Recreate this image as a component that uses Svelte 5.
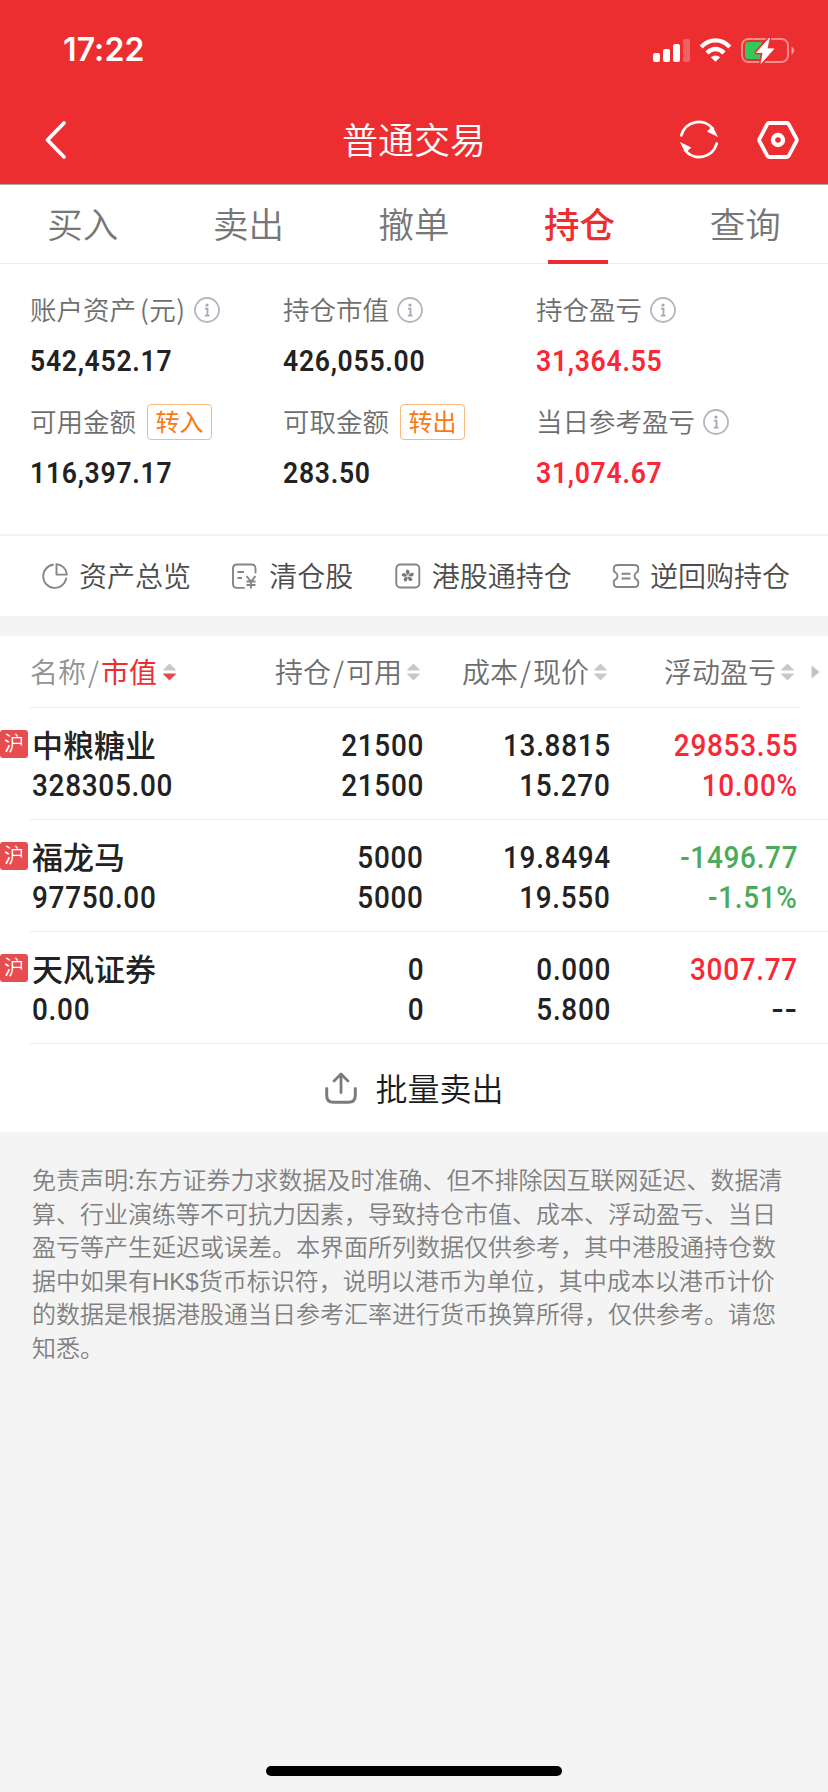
<script>
  const tabs = ['买入', '卖出', '撤单', '持仓', '查询'];
  const active = '持仓';

  const summary = [
    { label: '账户资产', unit: '(元)', value: '542,452.17', info: true },
    { label: '持仓市值', value: '426,055.00', info: true },
    { label: '持仓盈亏', value: '31,364.55', info: true, up: true },
    { label: '可用金额', value: '116,397.17', action: '转入' },
    { label: '可取金额', value: '283.50', action: '转出' },
    { label: '当日参考盈亏', value: '31,074.67', info: true, up: true }
  ];

  const links = [
    { icon: 'pie', text: '资产总览' },
    { icon: 'bill', text: '清仓股' },
    { icon: 'flower', text: '港股通持仓' },
    { icon: 'ticket', text: '逆回购持仓' }
  ];

  const rows = [
    { market: '沪', name: '中粮糖业', value: '328305.00', hold: '21500', usable: '21500', cost: '13.8815', price: '15.270', profit: '29853.55', rate: '10.00%', tone: 'up', rateTone: 'up' },
    { market: '沪', name: '福龙马', value: '97750.00', hold: '5000', usable: '5000', cost: '19.8494', price: '19.550', profit: '-1496.77', rate: '-1.51%', tone: 'down', rateTone: 'down' },
    { market: '沪', name: '天风证券', value: '0.00', hold: '0', usable: '0', cost: '0.000', price: '5.800', profit: '3007.77', rate: '--', tone: 'up', rateTone: 'empty' }
  ];
</script>

{#snippet sorter(on)}
  <svg class="sorter" width="13" height="18" viewBox="0 0 13 18">
    <path d="M6.5 .5 12.8 6.8V7.500H.2V6.8Z" fill="#c8c8c8" />
    <path d="M6.5 17.5 12.8 11.2V10.500H.2V11.2Z" fill={on ? '#e5494d' : '#c8c8c8'} />
  </svg>
{/snippet}

<div class="page">
  <header>
    <div class="status">
      <span class="time">17:22</span>
      <svg class="sys" width="142" height="28" viewBox="0 0 142 28">
        <g fill="#fff">
          <rect x="0" y="17" width="7" height="9" rx="2" />
          <rect x="10" y="13" width="7" height="13" rx="2" />
          <rect x="20" y="8" width="7" height="18" rx="2" />
          <rect x="30" y="3" width="7" height="23" rx="2" opacity=".25" />
          <path d="M62.5 25.8 57.8 21.3Q62.5 17.6 67.2 21.3Z" />
        </g>
        <g fill="none" stroke="#fff" stroke-width="4.4">
          <path d="M48.2 11Q54.5 4.4 62.5 4.4T76.8 11" />
          <path d="M54 17Q58 13 62.5 13T71 17" />
        </g>
        <rect x="89" y="3" width="46" height="23" rx="6.5" fill="none" stroke="#fff" stroke-opacity=".45" stroke-width="2" />
        <path d="M138.5 10.5Q141.2 11.8 141.2 14.5T138.5 18.5Z" fill="#fff" opacity=".5" />
        <path d="M95 6H109V23H95Q92 23 92 20V9Q92 6 95 6Z" fill="#34c759" />
        <path d="M116.5 2 103.5 16.5H110L108 27.3 121 12.8H114Z" fill="#fff" stroke="#ed2e31" stroke-width="4" stroke-linejoin="round" />
        <path d="M116.5 2 103.5 16.5H110L108 27.3 121 12.8H114Z" fill="#fff" stroke="#fff" stroke-width=".8" stroke-linejoin="round" />
      </svg>
    </div>
    <nav class="bar">
      <svg width="22" height="38" viewBox="0 0 22 38"><path d="M19 2 2.5 19 19 36" fill="none" stroke="#fff" stroke-width="3.8" stroke-linecap="round" stroke-linejoin="round" /></svg>
      <h1>普通交易</h1>
      <div class="tools">
        <svg width="38" height="38" viewBox="0 0 38 38">
          <g fill="none" stroke="#fff" stroke-width="2.800" stroke-linecap="round">
            <path d="M1.300 14.300A18.100 18.100 0 0 1 33 7.900" />
            <path d="M36.700 22.700A18.100 18.100 0 0 1 5 29.100" />
          </g>
          <path d="M31.500 5.800Q36 10 38 16L26.800 10.500 30.500 7Z" fill="#fff" />
          <path d="M6.500 31.200Q2 27 0 21L11.200 26.500 7.500 30Z" fill="#fff" />
        </svg>
        <svg width="42" height="38" viewBox="0 0 42 38" fill="none" stroke="#fff">
          <path d="M12.300 2H29.700Q31 2 31.700 3.200L39.500 17.800Q40.100 19 39.500 20.200L31.700 34.800Q31 36 29.700 36H12.300Q11 36 10.300 34.800L2.500 20.200Q1.900 19 2.500 17.800L10.300 3.200Q11 2 12.300 2Z" stroke-width="3.8" />
          <circle cx="21" cy="19" r="5" stroke-width="4.400" />
        </svg>
      </div>
    </nav>
  </header>

  <div class="tabs">
    {#each tabs as tab}
      <div class="tab" class:active={tab === active}>{tab}</div>
    {/each}
  </div>

  <section class="summary">
    {#each summary as item}
      <div class="cell">
        <div class="label">
          <span class="cjk">{item.label}</span>{#if item.unit}<span class="cjk unit">{item.unit}</span>{/if}
          {#if item.info}
            <svg class="info" width="26" height="26" viewBox="0 0 26 26">
              <circle cx="13" cy="13" r="12" fill="none" stroke="#b2b6be" stroke-width="1.8" />
              <circle cx="13" cy="8" r="1.6" fill="#a4a8b2" />
              <path d="M11 11.700H13.500V18.300M10.800 18.700H15.500" fill="none" stroke="#a4a8b2" stroke-width="1.800" />
            </svg>
          {/if}
          {#if item.action}<button>{item.action}</button>{/if}
        </div>
        <div class="amount" class:up={item.up}><span class="num">{item.value}</span></div>
      </div>
    {/each}
  </section>

  <section class="links">
    {#each links as link}
      <div class="link">
        <svg width="26" height="26" viewBox="0 0 26 26" fill="none" stroke="#858585" stroke-width="1.900">
          {#if link.icon === 'pie'}
            <path d="M11 1.800A11.600 11.600 0 1 0 24.200 15.400" stroke-linecap="round" />
            <path d="M14.500 1.100A11.300 11.300 0 0 1 24.900 11.600H14.500Z" stroke-linejoin="round" />
          {:else if link.icon === 'bill'}
            <path d="M12 24.900H5Q1 24.900 1 20.900V5.500Q1 1.500 5 1.500H19.500Q23.500 1.500 23.500 5.500V9.500" stroke-linecap="round" />
            <path d="M5.500 9H12M5.500 15H10" />
            <path d="M14.500 13 19 18.500 23.500 13M19 18.500V25.500M14.500 18.500H23.500M14.500 22H23.500" />
          {:else if link.icon === 'flower'}
            <rect x="1.300" y="1.500" width="23" height="23" rx="4" />
            <g fill="#777" stroke="none">
              {#each [0, 72, 144, 216, 288] as turn}
                <path d="M12.800 12.400Q9.500 9.500 11.800 6.600Q15.600 7.600 14.200 10.400Z" transform="rotate({turn} 12.800 13)" />
              {/each}
            </g>
          {:else}
            <path d="M5 2H21Q25.200 2 25.200 5V7.500Q25.200 8.800 23.500 9.500Q21.500 10.500 21.500 13T23.500 16.500Q25.200 17.200 25.200 18.500V21Q25.200 24 21 24H5Q.8 24 .8 21V18.500Q.8 17.200 2.500 16.500Q4.500 15.500 4.500 13T2.500 9.500Q.8 8.800 .8 7.500V5Q.8 2 5 2Z" stroke-linejoin="round" />
            <path d="M8.500 10.700H17.500M8.500 15.500H17.500" />
          {/if}
        </svg>
        <span class="cjk">{link.text}</span>
      </div>
    {/each}
  </section>

  <section class="table">
    <div class="thead">
      <div class="th first"><span class="cjk muted">名称<i>/</i></span><span class="cjk sorted">市值</span>{@render sorter(true)}</div>
      <div class="th"><span class="cjk">持仓<i>/</i>可用</span>{@render sorter(false)}</div>
      <div class="th"><span class="cjk">成本<i>/</i>现价</span>{@render sorter(false)}</div>
      <div class="th"><span class="cjk">浮动盈亏</span>{@render sorter(false)}</div>
      <svg class="more" width="9" height="14" viewBox="0 0 9 14"><path d="M.5 .5 8.500 7 .5 13.500Z" fill="#c3c3c3" /></svg>
    </div>
    {#each rows as row}
      <div class="row">
        <div class="badge">{row.market}</div>
        <div class="cols">
          <div class="stock"><div class="name">{row.name}</div><div><span class="num">{row.value}</span></div></div>
          <div class="col"><div><span class="num">{row.hold}</span></div><div><span class="num">{row.usable}</span></div></div>
          <div class="col"><div><span class="num">{row.cost}</span></div><div><span class="num">{row.price}</span></div></div>
          <div class="col"><div class={row.tone}><span class="num">{row.profit}</span></div><div class={row.rateTone}><span class="num">{row.rate}</span></div></div>
        </div>
      </div>
    {/each}
    <div class="batch">
      <svg width="32" height="32" viewBox="0 0 32 32" fill="none" stroke="#7b7b7b" stroke-width="3" stroke-linecap="round" stroke-linejoin="round">
        <path d="M1.700 16.500V23.500Q1.700 30.300 8.500 30.300H23.500Q30.300 30.300 30.300 23.500V16.500" />
        <path d="M16 20.500V2.500M9 9 16 2 23 9" stroke-width="2.800" />
      </svg>
      <span class="cjk">批量卖出</span>
    </div>
  </section>

  <p class="notice">免责声明:东方证券力求数据及时准确、但不排除因互联网延迟、数据清<br />算、行业演练等不可抗力因素，导致持仓市值、成本、浮动盈亏、当日<br />盈亏等产生延迟或误差。本界面所列数据仅供参考，其中港股通持仓数<br />据中如果有<span class="latin">HK$</span>货币标识符，说明以港币为单位，其中成本以港币计价<br />的数据是根据港股通当日参考汇率进行货币换算所得，仅供参考。请您<br />知悉。</p>

  <div class="home"></div>
</div>

<style>
  :global(body) { margin: 0; background: #f4f4f4; }
  .page {
    width: 828px;
    height: 1792px;
    display: flex;
    flex-direction: column;
    background: #f4f4f4;
    color: #222;
    font-family: "Noto Sans CJK SC", sans-serif;
    font-weight: 350;
    overflow: hidden;
  }
  .page * { box-sizing: border-box; }
  svg { display: block; flex: none; overflow: visible; }
  .cjk { margin-top: -2px; }
  i { font-style: normal; padding: 0 2px; }

  header { height: 185px; flex: none; background: #ed2e31; border-bottom: 1px solid #b0a9a9; color: #fff; }
  .status { height: 96px; padding: 2px 34px 0 63px; display: flex; align-items: center; justify-content: space-between; }
  .time { font: 600 32px/40px Inter, sans-serif; letter-spacing: 0.1px; margin-top: 2px; }
  .sys { margin-top: 2px; margin-right: -1px; }
  .bar { height: 88px; padding: 0 29px 0 45px; display: grid; grid-template-columns: 105px 1fr 134px; align-items: center; }
  h1 { margin: -5px 0 0; font-size: 36px; line-height: 48px; font-weight: 350; text-align: center; }
  .bar h1 { padding-left: 13px; }
  .tools { display: flex; gap: 39px; justify-content: flex-end; }

  .tabs { height: 79px; flex: none; display: flex; background: #fff; border-bottom: 1px solid #ebebeb; }
  .tab { flex: 1; display: flex; justify-content: center; padding-top: 11px; height: 79px; font-size: 35.500px; line-height: 54px; color: #777; position: relative; }
  .tab.active { color: #ed2e31; font-weight: 500; }
  .tab.active::after { content: ""; position: absolute; left: 51px; bottom: 0; width: 60px; height: 4px; background: #ed2e31; }

  .summary { height: 270px; flex: none; background: #fff; padding: 26px 0 0 30px; display: grid; grid-template-columns: 253px 253px 1fr; grid-auto-rows: 112px; }
  .label { height: 40px; display: flex; align-items: center; font-size: 26.500px; line-height: 40px; color: #6e6e6e; white-space: nowrap; }
  .unit { margin-left: 4px; letter-spacing: .5px; }
  .info { margin-left: 8px; }
  button { margin: 0 0 0 11px; width: 65px; height: 36px; padding: 0 0 2px; border: 1.500px solid #fbb87e; border-radius: 4px; background: #fff; color: #f97a15; font: 400 24px/30px "Noto Sans CJK SC", sans-serif; }
  .amount { height: 60px; padding-top: 2px; display: flex; align-items: center; font: 600 29.500px/58px Roboto, sans-serif; }
  .num { display: inline-block; transform: scaleX(.9); transform-origin: left center; letter-spacing: .8px; }
  .up { color: #fa2736; }
  .down { color: #4bab5a; }

  .links { height: 82px; flex: none; background: #fff; border-top: 2px solid #f4f4f4; padding: 0 38px 0 42px; display: flex; align-items: center; justify-content: space-between; font-size: 28px; line-height: 40px; color: #4c4c4c; }
  .link { display: flex; align-items: center; gap: 11px; }

  .table { margin-top: 20px; flex: none; background: #fff; }
  .thead { height: 72px; margin: 0 28px 0 30px; border-bottom: 1px solid #ebebeb; display: grid; grid-template-columns: 203px 187px 187px 187px 1fr; align-items: center; font-size: 28px; color: #6e6e6e; }
  .th { display: flex; align-items: center; justify-content: flex-end; white-space: nowrap; }
  .th .cjk { margin-right: -1px; }
  .first { justify-content: flex-start; }
  .first .cjk { margin-right: 0; }
  .sorter { margin-left: 6px; }
  .muted { color: #929292; }
  .sorted { color: #ed2e31; font-weight: 400; }
  .more { margin-left: 17px; }

  .row { height: 112px; display: flex; }
  .badge { width: 28px; height: 28px; flex: none; margin-top: 22px; border-radius: 3px; background: #e64c50; color: #fff; font-size: 20px; line-height: 26px; text-align: center; font-weight: 350; }
  .cols { flex: 1; margin-left: 2px; padding: 18px 31px 0 2px; border-bottom: 1px solid #ebebeb; display: grid; grid-template-columns: 204px 187px 187px 187px; font: 500 31px/40px Roboto, sans-serif; }
  .cols > div > div { height: 40px; white-space: nowrap; }
  .cols .name { font: 500 31px/36px "Noto Sans CJK SC", sans-serif; }
  .col { text-align: right; }
  .col .num { transform-origin: right center; margin-right: -1px; }
  .col .empty .num { transform: scaleX(1.150); }

  .batch { height: 88px; padding-left: 1px; display: flex; align-items: center; justify-content: center; gap: 18px; font-size: 32px; line-height: 44px; color: #1c1c1c; }

  .notice { margin: 0; padding: 30px 30px 0 32px; font-size: 24px; line-height: 33.500px; color: #808080; white-space: nowrap; }
  .latin { font-family: "Liberation Sans", sans-serif; line-height: 1; }
  .home { width: 296px; height: 10px; margin: auto auto 16px; border-radius: 5px; background: #000; }
</style>
